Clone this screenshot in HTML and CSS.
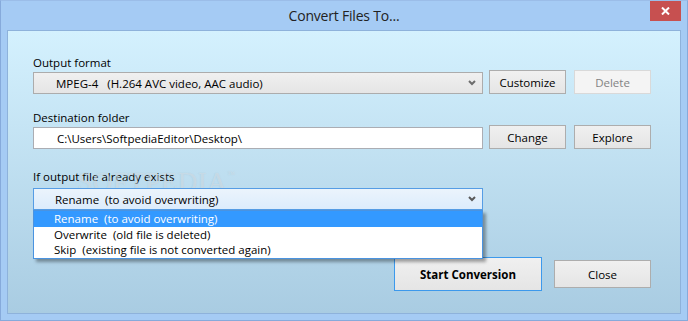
FILE: index.html
```html
<!DOCTYPE html>
<html lang="en">
  <head>
    <meta charset="utf-8">
    <title>Convert Files To...</title>
    <link rel="stylesheet" href="styles.css">
  </head>
  <body>
    <div class="window">
      <div class="titlebar">
        <div class="title">Convert Files To...</div>
        <div class="close-btn">
          <svg width="9" height="8" viewBox="0 0 9 8">
            <path d="M1 0.5 L8 7.5 M8 0.5 L1 7.5" stroke="#fff" stroke-width="2"/>
          </svg>
        </div>
      </div>

      <div class="client">
        <div class="label first">Output format</div>
        <div class="row">
          <div class="combo">
            <span class="combo-text">MPEG-4&nbsp;&nbsp;&nbsp;(H.264 AVC video, AAC audio)</span>
            <svg class="arrow" width="8" height="6" viewBox="0 0 8 6">
              <polyline points="1,1 4,4 7,1" fill="none" stroke="#6d6d6d" stroke-width="2"/>
            </svg>
          </div>
          <div class="btn">Customize</div>
          <div class="btn disabled">Delete</div>
        </div>

        <div class="label second">Destination folder</div>
        <div class="row">
          <div class="textbox">C:\Users\SoftpediaEditor\Desktop\</div>
          <div class="btn">Change</div>
          <div class="btn">Explore</div>
        </div>

        <div class="label third">
          If output file already exists
          <span class="watermark">SOFTPEDIA<sup>™</sup></span>
        </div>
        <div class="combo-wrap">
          <div class="combo open">
            <span class="combo-text">Rename&nbsp;&nbsp;(to avoid overwriting)</span>
            <svg class="arrow" width="8" height="6" viewBox="0 0 8 6">
              <polyline points="1,1 4,4 7,1" fill="none" stroke="#5a5a5a" stroke-width="2"/>
            </svg>
          </div>
          <div class="dropdown">
            <div class="option selected">Rename&nbsp;&nbsp;(to avoid overwriting)</div>
            <div class="option">Overwrite&nbsp;&nbsp;(old file is deleted)</div>
            <div class="option">Skip&nbsp;&nbsp;(existing file is not converted again)</div>
          </div>
        </div>

        <div class="actions">
          <div class="btn default">Start Conversion</div>
          <div class="btn close">Close</div>
        </div>
      </div>
    </div>
  </body>
</html>
```

FILE: styles.css
```css
body {
  margin: 0;
  font-family: "Open Sans", "Noto Sans", sans-serif;
  font-size: 12px;
  color: #000;
}
.window {
  width: 688px;
  height: 321px;
  box-sizing: border-box;
  background-color: #a5cbf4;
  border: 1px solid #86aadb;
  border-top-color: #9bbde8;
  display: flex;
  flex-direction: column;
}
.titlebar {
  height: 29px;
  position: relative;
  display: flex;
  justify-content: center;
}
.title {
  font-size: 14px;
  line-height: 29px;
  color: #222;
  letter-spacing: -0.2px;
}
.close-btn {
  position: absolute;
  top: 0;
  right: 6px;
  width: 31px;
  height: 20px;
  background-color: #c75050;
  display: flex;
  align-items: center;
  justify-content: center;
}
.client {
  flex: 1;
  margin: 0 6px 6px 6px;
  border: 1px solid #8eb2db;
  background: linear-gradient(#d4f1fe, #a9cce2);
  padding: 25px 29px 0 25px;
}
.label {
  height: 14px;
  line-height: 14px;
  font-size: 11.5px;
  white-space: nowrap;
}
.label.second {
  margin-top: 17px;
}
.label.third {
  margin-top: 21px;
  position: relative;
}
.watermark {
  position: absolute;
  left: 44px;
  top: -9px;
  font-family: "Liberation Serif", serif;
  font-size: 27px;
  line-height: 27px;
  letter-spacing: 0.5px;
  color: rgba(255, 255, 255, 0.35);
  text-shadow: 0 0 1px rgba(120, 150, 170, 0.35);
}
.watermark sup {
  font-size: 8px;
  vertical-align: 14px;
}
.row {
  display: flex;
  align-items: flex-end;
  height: 24px;
}
.combo,
.textbox {
  flex: 1;
  height: 22px;
  box-sizing: border-box;
  border: 1px solid #acacac;
  margin-right: 6px;
  display: flex;
  align-items: center;
  padding-left: 22px;
  font-size: 11.5px;
  white-space: nowrap;
}
.combo {
  background: linear-gradient(#f0f0f0, #e5e5e5);
}
.textbox {
  background-color: #fff;
  border-color: #abadb3;
  padding-left: 23px;
}
.combo-text {
  flex: 1;
}
.arrow {
  margin-right: 6px;
}
.btn {
  width: 77px;
  height: 24px;
  box-sizing: border-box;
  border: 1px solid #adadad;
  background: linear-gradient(#f0f0f0, #e5e5e5);
  display: flex;
  align-items: center;
  justify-content: center;
  font-size: 11.5px;
}
.btn + .btn {
  margin-left: 8px;
}
.btn.disabled {
  background: #f4f4f4;
  border-color: #d9d9d9;
  color: #838383;
}
.combo-wrap {
  position: relative;
  margin-top: 4px;
  width: 450px;
}
.combo.open {
  margin-right: 0;
  border-color: #569de5;
  background: linear-gradient(#ebf4fc, #dcecfc);
  padding-left: 21px;
}
.dropdown {
  position: absolute;
  top: 22px;
  left: 0;
  right: 0;
  background-color: #fff;
  border: 1px solid #4a93e0;
  box-shadow: 3px 3px 3px rgba(0, 0, 0, 0.35);
  z-index: 2;
}
.option {
  height: 15.5px;
  line-height: 15.5px;
  padding-left: 20px;
  font-size: 11.5px;
  white-space: nowrap;
}
.option.selected {
  background-color: #3399ff;
  color: #fff;
}
.actions {
  display: flex;
  justify-content: flex-end;
  align-items: center;
  margin-top: 47px;
}
.btn.default {
  width: 148px;
  height: 34px;
  border-color: #3c99ec;
  font-weight: bold;
}
.btn.close {
  width: 97px;
  height: 28px;
  margin-left: 12px;
}
```
